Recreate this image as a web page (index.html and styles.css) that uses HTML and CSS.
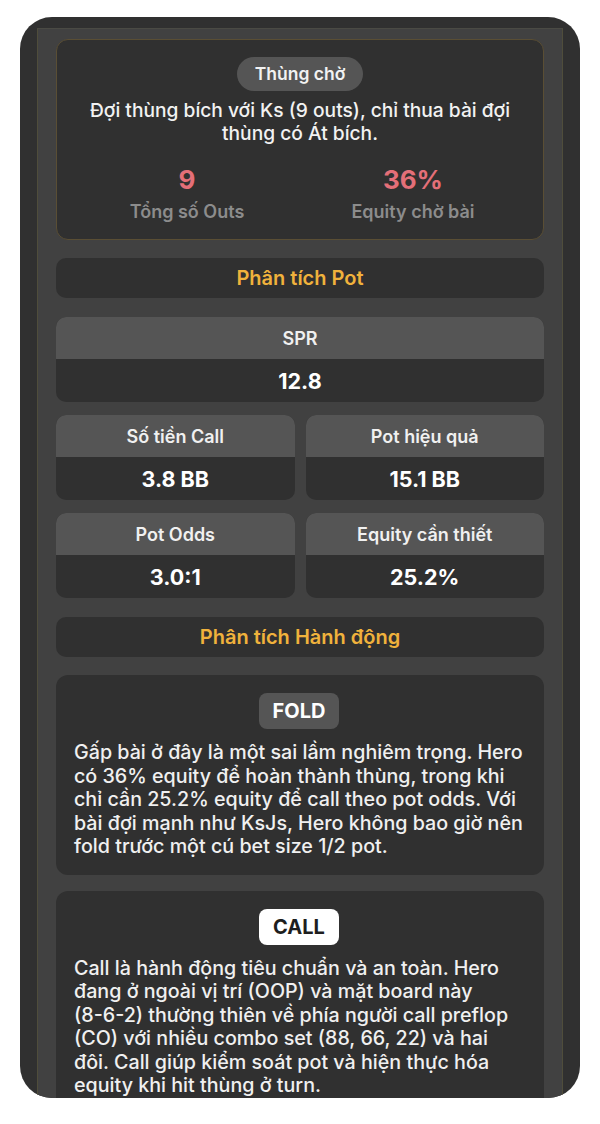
FILE: index.html
```html
<!DOCTYPE html>
<html lang="vi">
<head>
<meta charset="utf-8">
<title>Phân tích</title>
<link rel="stylesheet" href="styles.css">
</head>
<body>
<div class="phone">
  <div class="column">
    <section class="draw-card">
      <span class="pill">Thùng chờ</span>
      <p class="draw-desc">Đợi thùng bích với Ks (9 outs), chỉ thua bài đợi thùng có Át bích.</p>
      <div class="stats">
        <div class="stat">
          <div class="stat-value">9</div>
          <div class="stat-label">Tổng số Outs</div>
        </div>
        <div class="stat">
          <div class="stat-value">36%</div>
          <div class="stat-label">Equity chờ bài</div>
        </div>
      </div>
    </section>

    <h2 class="section-title">Phân tích Pot</h2>

    <div class="metric spr">
      <div class="metric-label">SPR</div>
      <div class="metric-value">12.8</div>
    </div>
    <div class="metric-grid">
      <div class="metric">
        <div class="metric-label">Số tiền Call</div>
        <div class="metric-value">3.8 BB</div>
      </div>
      <div class="metric">
        <div class="metric-label">Pot hiệu quả</div>
        <div class="metric-value">15.1 BB</div>
      </div>
      <div class="metric">
        <div class="metric-label">Pot Odds</div>
        <div class="metric-value">3.0:1</div>
      </div>
      <div class="metric">
        <div class="metric-label">Equity cần thiết</div>
        <div class="metric-value">25.2%</div>
      </div>
    </div>

    <h2 class="section-title actions-title">Phân tích Hành động</h2>

    <section class="action">
      <span class="action-tag">FOLD</span>
      <p class="action-text">Gấp bài ở đây là một sai lầm nghiêm trọng. Hero có 36% equity để hoàn thành thùng, trong khi chỉ cần 25.2% equity để call theo pot odds. Với bài đợi mạnh như KsJs, Hero không bao giờ nên fold trước một cú bet size 1/2 pot.</p>
    </section>

    <section class="action call">
      <span class="action-tag best">CALL</span>
      <p class="action-text">Call là hành động tiêu chuẩn và an toàn. Hero đang ở ngoài vị trí (OOP) và mặt board này <span class="nowrap">(8-6-2)</span> thường thiên về phía người call preflop (CO) với nhiều combo set (88, 66, 22) và hai đôi. Call giúp kiểm soát pot và hiện thực hóa equity khi hit thùng ở turn.</p>
    </section>
  </div>
</div>
</body>
</html>
```

FILE: styles.css
```css
* {
  box-sizing: border-box;
}

html, body {
  margin: 0;
  padding: 0;
  background: #ffffff;
}

body {
  font-family: Inter, "Noto Sans", "Liberation Sans", sans-serif;
  color: #f2f2f2;
  padding: 17px 20px 0;
}

.phone {
  height: 1081px;
  background: #303030;
  border-radius: 32px;
  overflow: hidden;
  padding: 11px 17px 0;
}

.column {
  height: 100%;
  background: #414141;
  border-left: 1px solid #4f4d3b;
  border-right: 1px solid #4f4d3b;
  border-top: 1px solid #4a4a44;
  padding: 10px 18px 0;
  display: flex;
  flex-direction: column;
  gap: 18px;
}

/* draw summary card */
.draw-card {
  background: #303030;
  border: 1px solid #5a4e34;
  border-radius: 12px;
  padding: 17px 12px 15px;
  display: flex;
  flex-direction: column;
  align-items: center;
  flex-shrink: 0;
}

.pill {
  background: #555555;
  border-radius: 17px;
  padding: 7px 18px;
  font-size: 17.5px;
  font-weight: 600;
  line-height: 20px;
}

.draw-desc {
  margin: 8px 0 0;
  text-align: center;
  font-size: 19.2px;
  line-height: 23px;
  font-weight: 500;
}

.stats {
  align-self: stretch;
  display: grid;
  grid-template-columns: 1fr 1fr;
  margin: 20px 5px 0;
}

.stat {
  text-align: center;
}

.stat-value {
  color: #e46f78;
  font-size: 26px;
  font-weight: 700;
  line-height: 30px;
}

.stat-label {
  color: #8c8c8c;
  font-size: 18px;
  font-weight: 600;
  line-height: 24px;
  margin-top: 5px;
}

/* section headings */
.section-title {
  margin: 0;
  background: #303030;
  border-radius: 10px;
  height: 40px;
  flex-shrink: 0;
  display: flex;
  align-items: center;
  justify-content: center;
  color: #f0b23c;
  font-size: 20px;
  font-weight: 600;
}

.actions-title {
  margin-top: 1px;
}

/* pot metrics */
.metric {
  border-radius: 10px;
  overflow: hidden;
  background: #303030;
  text-align: center;
  flex-shrink: 0;
}

.spr {
  margin-top: 1px;
}

.metric-label {
  background: #555555;
  height: 42px;
  display: flex;
  align-items: center;
  justify-content: center;
  font-size: 18px;
  font-weight: 600;
  color: #f0f0f0;
}

.metric-value {
  height: 43px;
  display: flex;
  align-items: center;
  justify-content: center;
  font-size: 21.5px;
  font-weight: 700;
  color: #ffffff;
}

.metric-grid {
  display: grid;
  grid-template-columns: 1fr 1fr;
  gap: 13px 11px;
  margin-top: -5px;
  flex-shrink: 0;
}

/* action analysis cards */
.action {
  background: #303030;
  border-radius: 12px;
  padding: 18px 20px 16px 18px;
  display: flex;
  flex-direction: column;
  align-items: center;
  flex-shrink: 0;
}

.action.call {
  margin-top: -2px;
}

.action-tag {
  background: #555555;
  color: #ffffff;
  border-radius: 8px;
  padding: 7px 14px;
  font-size: 20px;
  font-weight: 700;
  line-height: 22px;
}

.action-tag.best {
  background: #ffffff;
  color: #1e1e1e;
}

.action-text {
  margin: 12px 0 0;
  align-self: stretch;
  font-size: 19.7px;
  line-height: 23.5px;
  font-weight: 500;
  color: #f0f0f0;
}

/* keeps the board "(8-6-2)" from splitting at its hyphens */
.nowrap {
  display: inline-block;
  white-space: nowrap;
}
```
